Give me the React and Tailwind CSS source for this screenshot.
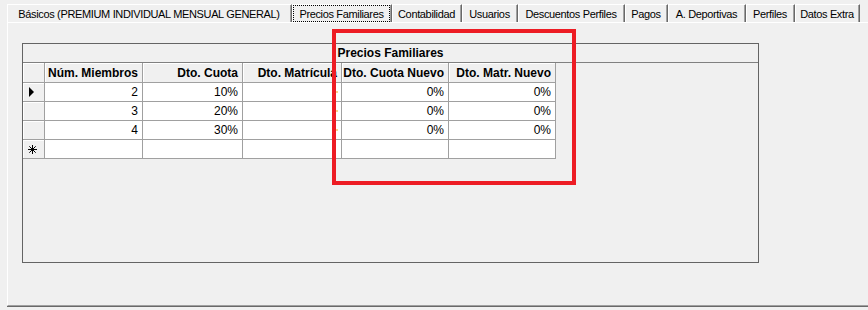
import { useState } from 'react';

const tabs = [
  { label: 'Básicos (PREMIUM INDIVIDUAL MENSUAL GENERAL)', w: 'w-[285px]' },
  { label: 'Precios Familiares', w: 'w-[100px]' },
  { label: 'Contabilidad', w: 'w-[70px]' },
  { label: 'Usuarios', w: 'w-[56px]' },
  { label: 'Descuentos Perfiles', w: 'w-[107px]' },
  { label: 'Pagos', w: 'w-[43px]' },
  { label: 'A. Deportivas', w: 'w-[78px]' },
  { label: 'Perfiles', w: 'w-[49px]' },
  { label: 'Datos Extra', w: 'w-[65px]' },
];

const columns = [
  { label: 'Núm. Miembros', w: 'w-[98px]' },
  { label: 'Dto. Cuota', w: 'w-[100px]' },
  { label: 'Dto. Matrícula', w: 'w-[99px]' },
  { label: 'Dto. Cuota Nuevo', w: 'w-[107px]' },
  { label: 'Dto. Matr. Nuevo', w: 'w-[107px]' },
];

const rows = [
  ['2', '10%', '', '0%', '0%'],
  ['3', '20%', '', '0%', '0%'],
  ['4', '30%', '', '0%', '0%'],
];

const Indicator = ({ type }) => (
  <div className="w-[22px] h-full shrink-0 border-r border-b border-[#a0a0a0] bg-[#f0f0f0] shadow-[inset_1px_1px_0_#ffffff] flex items-center justify-center">
    {type === 'current' && (
      <svg width="6" height="10" viewBox="0 0 6 10" className="-ml-[3px]">
        <path d="M0 0 L5 5 L0 10 Z" fill="#000" />
      </svg>
    )}
    {type === 'new' && (
      <svg width="9" height="9" viewBox="0 0 9 9" className="-ml-[2px]">
        <path d="M4.5 0 V9 M0 4.5 H9 M1.3 1.3 L7.7 7.7 M7.7 1.3 L1.3 7.7" stroke="#000" strokeWidth="1" />
      </svg>
    )}
  </div>
);

const App = () => {
  const [active, setActive] = useState('Precios Familiares');

  return (
    <div className="relative w-[868px] h-[310px] overflow-hidden bg-[#f0f0f0] font-['Liberation_Sans',Arial,sans-serif] text-black">
      {/* tab strip */}
      <div className="flex h-[22px] pt-[4px] pl-[7px]">
        {tabs.map((tab) => (
          <button
            key={tab.label}
            onClick={() => setActive(tab.label)}
            className={`${tab.w} h-[18px] shrink-0 flex items-stretch border-t border-l border-white border-r border-r-[#696969] shadow-[inset_-1px_0_0_#a0a0a0] pr-[1px] text-[11px] leading-none tracking-[-0.35px] whitespace-nowrap`}
          >
            <span
              className={`flex-1 flex items-center justify-center pt-[1px] ${
                active === tab.label ? 'border border-dotted border-black' : ''
              }`}
            >
              {tab.label}
            </span>
          </button>
        ))}
      </div>

      {/* tab page */}
      <div className="ml-[7px] w-[900px] h-[284px] border-t border-l border-white border-b border-b-[#a0a0a0] shadow-[0_1px_0_#696969] pt-[20px] pl-[14px]">
        <div className="w-[737px] h-[220px] border border-[#646464] flex flex-col">
          <div className="h-[19px] shrink-0 border-b border-[#808080] flex items-center justify-center text-[12px] font-bold">
            Precios Familiares
          </div>

          <div className="flex h-[20px] text-[12px] font-bold">
            <Indicator />
            {columns.map((col) => (
              <div
                key={col.label}
                className={`${col.w} shrink-0 h-full border-r border-b border-[#a0a0a0] bg-[#f0f0f0] shadow-[inset_1px_1px_0_#ffffff] flex items-center justify-end pr-[4px] overflow-hidden whitespace-nowrap`}
              >
                {col.label}
              </div>
            ))}
          </div>

          {rows.map((row, i) => (
            <div key={i} className="flex h-[19px] text-[12px]">
              <Indicator type={i === 0 ? 'current' : undefined} />
              {row.map((val, j) => (
                <div
                  key={j}
                  className={`${columns[j].w} shrink-0 h-full border-r border-b border-[#a0a0a0] bg-white flex items-center justify-end pr-[4px] relative`}
                >
                  {val}
                  {j === 2 && (
                    <span className="absolute right-[3px] top-[8px] w-[2px] h-[2px] rounded-full bg-[#f5c66a]" />
                  )}
                </div>
              ))}
            </div>
          ))}

          <div className="flex h-[19px]">
            <Indicator type="new" />
            {columns.map((col) => (
              <div key={col.label} className={`${col.w} shrink-0 h-full border-r border-b border-[#a0a0a0] bg-white`} />
            ))}
          </div>
        </div>
      </div>

      {/* red annotation box */}
      <div className="absolute left-[332px] top-[29px] w-[244px] h-[156px] border-4 border-[#ed1c24] pointer-events-none" />
    </div>
  );
};

export default App;
